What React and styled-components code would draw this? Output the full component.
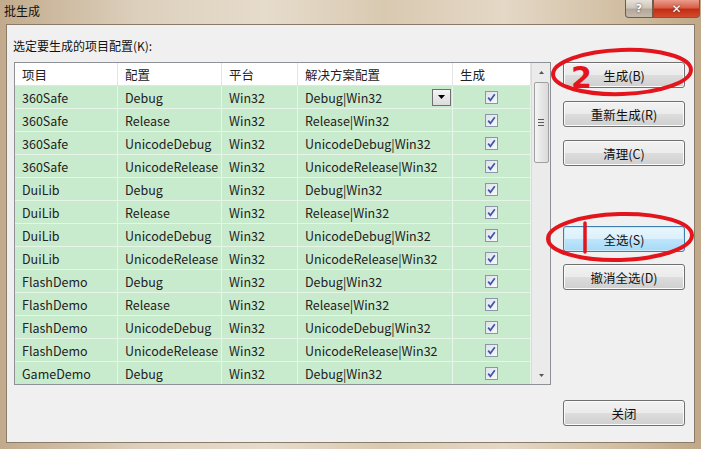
import styled, { createGlobalStyle } from "styled-components";

const GlobalStyle = createGlobalStyle`
  html, body { margin: 0; padding: 0; }
  body {
    font-family: "Noto Sans CJK SC", "Noto Sans", sans-serif;
    font-size: 12px;
    color: #000;
    background: #d6c6ad;
  }
`;

const Window = styled.div`
  position: relative;
  width: 701px;
  height: 449px;
  display: flex;
  flex-direction: column;
  overflow: hidden;
  background: linear-gradient(90deg, #c2ab8c 0%, #ddd0bd 20%, #e6dccc 38%, #d9c9b1 55%, #e4d8c6 72%, #d2bfa3 88%, #c0a888 100%);
`;

const TitleBar = styled.div`
  height: 24px;
  display: flex;
  align-items: flex-start;
  justify-content: space-between;
  padding-left: 4px;
`;

const Title = styled.span`
  line-height: 21px;
  font-size: 12px;
  color: #111;
`;

const Caption = styled.div`
  display: flex;
  margin-right: 1px;
`;

const CaptionButton = styled.div`
  width: ${({ w }) => w}px;
  height: 18px;
  display: flex;
  align-items: center;
  justify-content: center;
  box-sizing: border-box;
  border: 1px solid #6f5d4c;
  border-top: none;
  border-radius: ${({ first }) => (first ? "0 0 0 4px" : "0 0 4px 0")};
  color: #fff;
  font-family: "DejaVu Sans", sans-serif;
  font-weight: bold;
  font-size: ${({ close }) => (close ? "12px" : "11px")};
  text-shadow: 0 0 2px #333;
  background: ${({ close }) =>
    close
      ? "linear-gradient(#eb9c8c 0%, #d8604a 45%, #c42d12 55%, #d24a2e 100%)"
      : "linear-gradient(#e6e0d8 0%, #cfc6bb 45%, #b3a898 55%, #c4baad 100%)"};
`;

const Frame = styled.div`
  flex: 1;
  display: flex;
  padding: 0 6px 6px 6px;
`;

const Client = styled.div`
  flex: 1;
  display: flex;
  background: #f0f0f0;
  border: 1px solid #8a7c69;
  padding: 12px 9px 16px 7px;
`;

const LeftPane = styled.div`
  display: flex;
  flex-direction: column;
`;

const Label = styled.div`
  margin-left: -1px;
  line-height: 17px;
  margin-bottom: 8px;
  color: #111;
`;

const TableBox = styled.div`
  display: flex;
  width: 535px;
  height: 321px;
  border: 1px solid #8e9296;
  background: #fff;
`;

const Grid = styled.div`
  display: flex;
  flex-direction: column;
  width: 516px;
  overflow: hidden;
`;

const cols = [103, 104, 76, 155, 78];

const Row = styled.div`
  display: grid;
  grid-template-columns: ${cols.map((c) => c + "px").join(" ")};
  height: 23px;
  flex: none;
  background: ${({ head }) => (head ? "#fff" : "#c9ebcd")};
  border-bottom: 1px solid ${({ head }) => (head ? "#e5e5e5" : "#e6f5e8")};
  box-sizing: border-box;
`;

const Cell = styled.div`
  display: flex;
  align-items: center;
  justify-content: ${({ center }) => (center ? "center" : "space-between")};
  padding-left: ${({ center }) => (center ? 0 : 7)}px;
  padding-right: 1px;
  border-right: 1px solid ${({ head }) => (head ? "#e3e3e3" : "#e6f5e8")};
  white-space: nowrap;
  color: #222;
  font-size: 12.5px;
`;

const Combo = styled.div`
  width: 19px;
  height: 17px;
  box-sizing: border-box;
  border: 1px solid #6f6f6f;
  background: linear-gradient(#f4f4f4, #dcdcdc);
  display: flex;
  align-items: center;
  justify-content: center;
`;

const Check = styled.div`
  width: 13px;
  height: 13px;
  box-sizing: border-box;
  border: 1px solid #8a97ab;
  background: linear-gradient(135deg, #dfe3ea, #f7f8fa);
  display: flex;
  align-items: center;
  justify-content: center;
`;

const ScrollBar = styled.div`
  width: 18px;
  display: flex;
  flex-direction: column;
  align-items: center;
  background: #ebebeb;
  border-left: 1px solid #dadada;
`;

const Arrow = styled.div`
  height: 18px;
  width: 100%;
  display: flex;
  align-items: center;
  justify-content: center;
  flex: none;
`;

const Thumb = styled.div`
  width: 15px;
  height: 81px;
  box-sizing: border-box;
  margin-top: 1px;
  border: 1px solid #a0a0a0;
  border-radius: 2px;
  background: linear-gradient(90deg, #f5f5f5, #e6e6e6 50%, #dadada);
  display: flex;
  flex-direction: column;
  align-items: center;
  justify-content: center;
  gap: 2px;
`;

const Grip = styled.div`
  width: 6px;
  height: 1px;
  background: #5a5a5a;
`;

const Track = styled.div`
  flex: 1;
`;

const Buttons = styled.div`
  display: flex;
  flex-direction: column;
  margin-left: 12px;
  margin-top: 25px;
  width: 122px;
`;

const Button = styled.div`
  height: 26px;
  box-sizing: border-box;
  flex: none;
  margin-top: ${({ gap }) => gap}px;
  border: 1px solid ${({ focus }) => (focus ? "#3c7fb1" : "#707070")};
  border-radius: 3px;
  box-shadow: inset 0 0 0 1px ${({ focus }) => (focus ? "#c8e8f8" : "#fbfbfb")};
  background: ${({ focus }) =>
    focus
      ? "linear-gradient(#eaf6fd 0%, #d9f0fc 50%, #bee6fd 50%, #a7d9f5 100%)"
      : "linear-gradient(#f2f2f2 0%, #ebebeb 50%, #dddddd 50%, #cfcfcf 100%)"};
  display: flex;
  align-items: center;
  justify-content: center;
  color: #111;
  font-size: 12.5px;
`;

const Spacer = styled.div`
  flex: 1;
`;

const Marks = styled.svg`
  position: absolute;
  left: 0;
  top: 0;
  pointer-events: none;
`;

const MarkNum = styled.text`
  font-family: "DejaVu Sans", sans-serif;
  font-weight: bold;
  font-size: 30px;
  fill: #e3141c;
`;

const rows = [
  ["360Safe", "Debug"],
  ["360Safe", "Release"],
  ["360Safe", "UnicodeDebug"],
  ["360Safe", "UnicodeRelease"],
  ["DuiLib", "Debug"],
  ["DuiLib", "Release"],
  ["DuiLib", "UnicodeDebug"],
  ["DuiLib", "UnicodeRelease"],
  ["FlashDemo", "Debug"],
  ["FlashDemo", "Release"],
  ["FlashDemo", "UnicodeDebug"],
  ["FlashDemo", "UnicodeRelease"],
  ["GameDemo", "Debug"],
];

function CheckMark() {
  return (
    <Check>
      <svg width="9" height="9" viewBox="0 0 9 9">
        <path d="M1.2 4.6 L3.4 7.3 L7.8 1.2" fill="none" stroke="#3d57a8" strokeWidth="1.7" />
      </svg>
    </Check>
  );
}

function Tri({ up, size = 7, color = "#000" }) {
  const h = size / 2 + 0.5;
  return (
    <svg width={size} height={h} viewBox={`0 0 ${size} ${h}`}>
      <path d={up ? `M0 ${h} L${size / 2} 0 L${size} ${h}Z` : `M0 0 L${size} 0 L${size / 2} ${h}Z`} fill={color} />
    </svg>
  );
}

export default function App() {
  return (
    <>
      <GlobalStyle />
      <Window>
        <TitleBar>
          <Title>批生成</Title>
          <Caption>
            <CaptionButton w={28} first>?</CaptionButton>
            <CaptionButton w={47} close>✕</CaptionButton>
          </Caption>
        </TitleBar>
        <Frame>
          <Client>
            <LeftPane>
              <Label>选定要生成的项目配置(K):</Label>
              <TableBox>
                <Grid>
                  <Row head>
                    <Cell head>项目</Cell>
                    <Cell head>配置</Cell>
                    <Cell head>平台</Cell>
                    <Cell head>解决方案配置</Cell>
                    <Cell head>生成</Cell>
                  </Row>
                  {rows.map(([proj, conf], i) => (
                    <Row key={i}>
                      <Cell>{proj}</Cell>
                      <Cell>{conf}</Cell>
                      <Cell>Win32</Cell>
                      <Cell>
                        {conf}|Win32
                        {i === 0 && (
                          <Combo>
                            <Tri size={7} />
                          </Combo>
                        )}
                      </Cell>
                      <Cell center>
                        <CheckMark />
                      </Cell>
                    </Row>
                  ))}
                </Grid>
                <ScrollBar>
                  <Arrow>
                    <Tri up size={5} color="#555" />
                  </Arrow>
                  <Thumb>
                    <Grip />
                    <Grip />
                    <Grip />
                  </Thumb>
                  <Track />
                  <Arrow>
                    <Tri size={5} color="#555" />
                  </Arrow>
                </ScrollBar>
              </TableBox>
            </LeftPane>
            <Buttons>
              <Button gap={0}>生成(B)</Button>
              <Button gap={13}>重新生成(R)</Button>
              <Button gap={13}>清理(C)</Button>
              <Button gap={60} focus>全选(S)</Button>
              <Button gap={12}>撤消全选(D)</Button>
              <Spacer />
              <Button gap={0}>关闭</Button>
            </Buttons>
          </Client>
        </Frame>
        <Marks width="701" height="449" viewBox="0 0 701 449">
          <ellipse cx="622" cy="72" rx="69" ry="22" fill="none" stroke="#e3141c" strokeWidth="4" transform="rotate(-2 622 72)" />
          <ellipse cx="620" cy="237" rx="72" ry="23" fill="none" stroke="#e3141c" strokeWidth="4" transform="rotate(-1.5 620 237)" />
          <MarkNum x="571" y="88">2</MarkNum>
          <line x1="585" y1="223" x2="585" y2="252" stroke="#e3141c" strokeWidth="3.5" strokeLinecap="round" />
        </Marks>
      </Window>
    </>
  );
}
